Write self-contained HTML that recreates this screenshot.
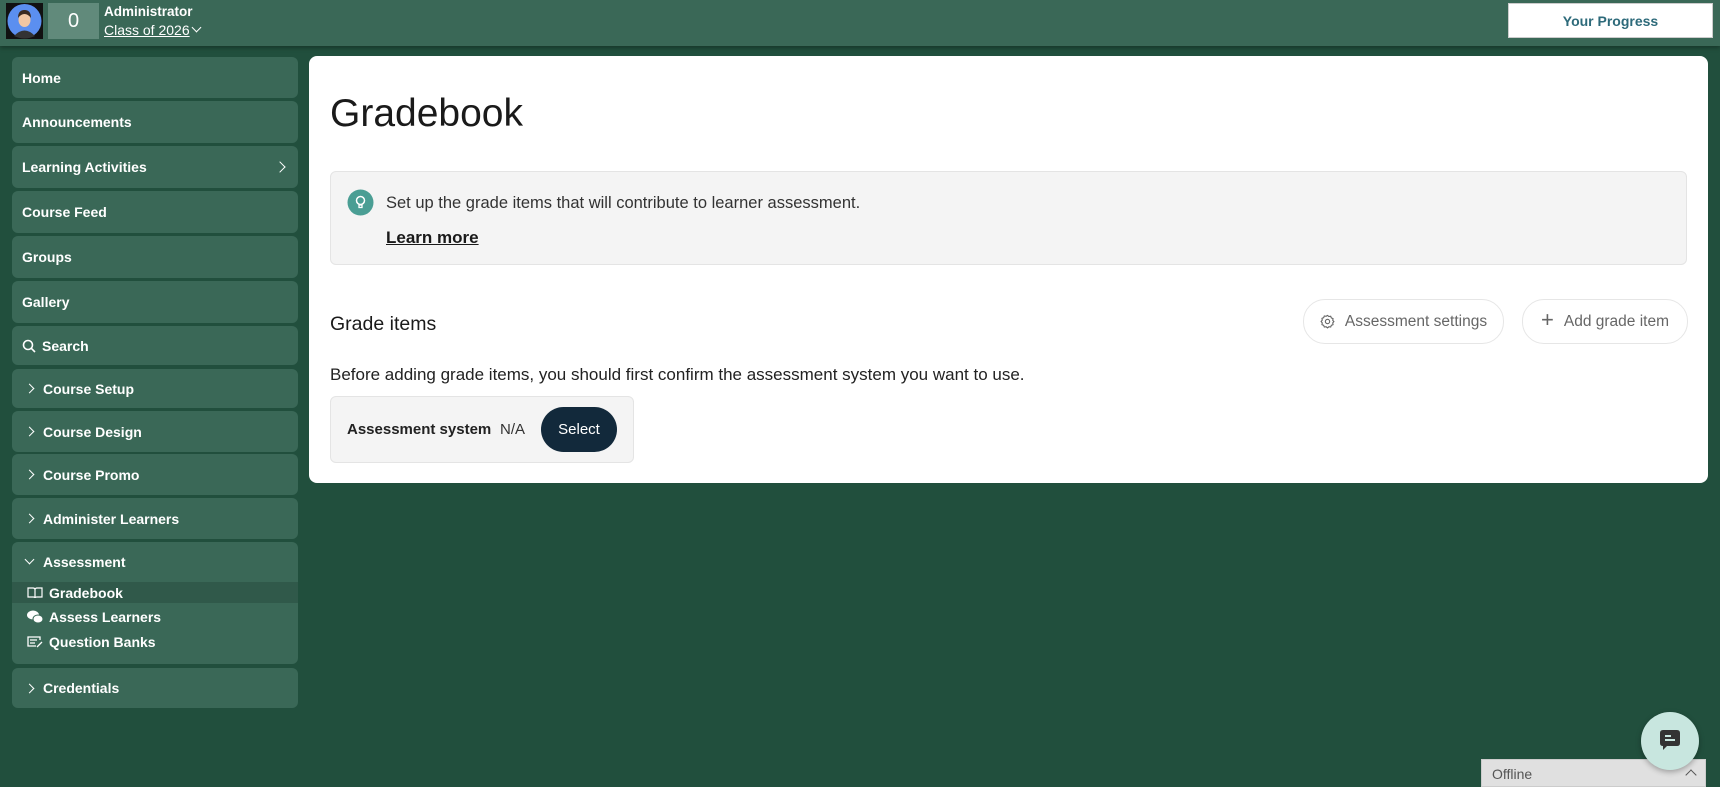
<!DOCTYPE html>
<html><head><meta charset="utf-8"><style>
*{box-sizing:border-box;margin:0;padding:0}
body{width:1720px;height:787px;overflow:hidden;background:#214f3d;font-family:"Liberation Sans",sans-serif;position:relative}
.top{position:absolute;left:0;top:0;width:1720px;height:46px;background:#3a6857;box-shadow:0 2px 4px rgba(0,0,0,.3)}
.abs{position:absolute}
.nav{position:absolute;left:12px;width:286px;background:#3a6857;border-radius:6px;color:#fff;font-weight:bold;font-size:14px;display:flex;align-items:center;padding-left:10px}
.chev{display:inline-block;width:7px;height:7px;border-right:1.6px solid #fff;border-bottom:1.6px solid #fff;transform:rotate(-45deg);margin-right:10px;margin-left:4px}
.sub{position:absolute;left:12px;width:286px;height:22px;color:#fff;font-weight:bold;font-size:14px;display:flex;align-items:center;padding-left:14px}
.card{position:absolute;left:309px;top:56px;width:1399px;height:427px;background:#fff;border-radius:8px}
.btn{position:absolute;border:1px solid #e6e6e6;border-radius:22px;color:#666;font-size:15.5px;display:flex;align-items:center;justify-content:center;gap:10px}
</style></head><body>
<div class="top"></div>
<div class="abs" style="left:6px;top:3px;width:37px;height:36px;background:#111"></div>
<svg class="abs" style="left:6px;top:3px" width="37" height="36" viewBox="0 0 37 36"><circle cx="18.5" cy="18" r="17" fill="#5b8ff0"/><path d="M8 33 Q18.5 22 29 33 Q18.5 38 8 33Z" fill="#333"/><ellipse cx="18.5" cy="17" rx="6" ry="7" fill="#f1c7a3"/><path d="M12 15 Q12 7 18.5 7 Q25 7 25 15 Q22 11 18.5 11 Q15 11 12 15Z" fill="#3a2a20"/></svg>
<div class="abs" style="left:48px;top:3px;width:51px;height:36px;background:#618a7b;color:#fff;font-size:20px;display:flex;align-items:center;justify-content:center">0</div>
<div class="abs" style="left:104px;top:4px;color:#fff;font-weight:bold;font-size:13.5px">Administrator</div>
<div class="abs" style="left:104px;top:22px;color:#fff;font-size:14px;text-decoration:underline">Class of 2026</div>
<div class="abs" style="left:193px;top:24px;width:7px;height:7px;border-right:1.6px solid #fff;border-bottom:1.6px solid #fff;transform:rotate(45deg)"></div>
<div class="abs" style="left:1508px;top:3px;width:205px;height:35px;background:#fff;border:1px solid #ccc;color:#2d6a7a;font-weight:bold;font-size:14px;display:flex;align-items:center;justify-content:center">Your Progress</div>

<div class="nav" style="top:57px;height:41px">Home</div>
<div class="nav" style="top:101px;height:42px">Announcements</div>
<div class="nav" style="top:146px;height:42px">Learning Activities<span style="position:absolute;right:14px;top:17px;width:8px;height:8px;border-right:1.6px solid #fff;border-bottom:1.6px solid #fff;transform:rotate(-45deg)"></span></div>
<div class="nav" style="top:191px;height:42px">Course Feed</div>
<div class="nav" style="top:236px;height:42px">Groups</div>
<div class="nav" style="top:281px;height:42px">Gallery</div>
<div class="nav" style="top:326px;height:39px"><svg width="14" height="14" viewBox="0 0 14 14" style="margin-right:6px"><circle cx="6" cy="6" r="4.5" fill="none" stroke="#fff" stroke-width="1.6"/><path d="M9.3 9.3L13 13" stroke="#fff" stroke-width="1.6"/></svg>Search</div>
<div class="nav" style="top:369px;height:39px"><span class="chev"></span>Course Setup</div>
<div class="nav" style="top:411px;height:41px"><span class="chev"></span>Course Design</div>
<div class="nav" style="top:454px;height:41px"><span class="chev"></span>Course Promo</div>
<div class="nav" style="top:498px;height:41px"><span class="chev"></span>Administer Learners</div>
<div class="nav" style="top:542px;height:122px;align-items:flex-start;padding-top:12px"><span class="chev" style="transform:rotate(45deg);margin-top:2px"></span>Assessment</div>
<div class="sub" style="top:582px;height:21px;background:#30594a">
<svg width="16" height="12" viewBox="0 0 16 12" style="margin-right:6px;margin-left:1px"><path d="M1 1h5q2 0 2 2v8q0-1-2-1H1ZM15 1h-5q-2 0-2 2v8q0-1 2-1h5Z" fill="none" stroke="#fff" stroke-width="1.2"/></svg>Gradebook</div>
<div class="sub" style="top:606px"><svg width="16" height="14" viewBox="0 0 16 14" style="margin-right:6px;margin-left:1px"><ellipse cx="6" cy="5" rx="6" ry="4.5" fill="#fff"/><ellipse cx="11" cy="9" rx="5" ry="4" fill="#fff" stroke="#3a6857"/></svg>Assess Learners</div>
<div class="sub" style="top:631px"><svg width="16" height="12" viewBox="0 0 16 12" style="margin-right:6px;margin-left:1px"><path d="M13 4V1H1v9h8" fill="none" stroke="#fff" stroke-width="1.3"/><path d="M3 4h7M3 7h5M10 11l5-5" stroke="#fff" stroke-width="1.3"/></svg>Question Banks</div>
<div class="nav" style="top:668px;height:40px"><span class="chev"></span>Credentials</div>

<div class="card"></div>
<div class="abs" style="left:330px;top:92px;font-size:39px;color:#1a1a1a">Gradebook</div>
<div class="abs" style="left:330px;top:171px;width:1357px;height:94px;background:#f4f4f4;border:1px solid #e4e4e4;border-radius:6px"></div>
<svg class="abs" style="left:347px;top:189px" width="27" height="27" viewBox="0 0 27 27"><circle cx="13.5" cy="13.5" r="13" fill="#4a9e94"/><circle cx="13.5" cy="11.5" r="4" fill="none" stroke="#fff" stroke-width="1.5"/><path d="M12 16h3v2.5h-3z" fill="none" stroke="#fff" stroke-width="1.3"/></svg>
<div class="abs" style="left:386px;top:194px;font-size:16.5px;color:#333">Set up the grade items that will contribute to learner assessment.</div>
<div class="abs" style="left:386px;top:228px;font-size:17px;color:#1a1a1a;font-weight:bold;text-decoration:underline">Learn more</div>
<div class="abs" style="left:330px;top:313px;font-size:19.5px;color:#1a1a1a">Grade items</div>
<div class="btn" style="left:1303px;top:299px;width:201px;height:45px"><svg width="15" height="15" viewBox="0 0 16 16"><path d="M8 1.5l1.5 1.2 1.9-.3.7 1.8 1.8.7-.3 1.9L14.8 8l-1.2 1.5.3 1.9-1.8.7-.7 1.8-1.9-.3L8 14.8l-1.5-1.2-1.9.3-.7-1.8-1.8-.7.3-1.9L1.2 8l1.2-1.5-.3-1.9 1.8-.7.7-1.8 1.9.3Z" fill="none" stroke="#666" stroke-width="1.2"/><circle cx="8" cy="8" r="2.3" fill="none" stroke="#666" stroke-width="1.2"/></svg>Assessment settings</div>
<div class="btn" style="left:1522px;top:299px;width:166px;height:45px"><span style="font-size:22px;font-weight:300;margin-top:-3px">+</span>Add grade item</div>
<div class="abs" style="left:330px;top:365px;font-size:17px;color:#222">Before adding grade items, you should first confirm the assessment system you want to use.</div>
<div class="abs" style="left:330px;top:396px;width:304px;height:67px;background:#f4f4f4;border:1px solid #e4e4e4;border-radius:6px"></div>
<div class="abs" style="left:347px;top:421px;font-size:15px;font-weight:bold;color:#222">Assessment system</div>
<div class="abs" style="left:500px;top:421px;font-size:15px;color:#333">N/A</div>
<div class="abs" style="left:541px;top:407px;width:76px;height:45px;background:#12293b;border-radius:23px;color:#fff;font-size:15px;display:flex;align-items:center;justify-content:center">Select</div>

<div class="abs" style="left:1481px;top:759px;width:225px;height:28px;background:#e0e0e0;border:1px solid #ccc;color:#555;font-size:14px;padding:6px 10px">Offline<span style="position:absolute;right:10px;top:11px;width:8px;height:8px;border-left:1.6px solid #555;border-top:1.6px solid #555;transform:rotate(45deg)"></span></div>
<div class="abs" style="left:1641px;top:712px;width:58px;height:58px;border-radius:50%;background:#c8e6df;box-shadow:0 2px 6px rgba(0,0,0,.3)"></div>
<svg class="abs" style="left:1656px;top:727px" width="28" height="28" viewBox="0 0 28 28"><path d="M4 6q0-3 3-3h14q3 0 3 3v10q0 3-3 3H11l-4 4v-4q-3 0-3-3Z" fill="#333"/><path d="M9 9h6M9 13h10" stroke="#c8e6df" stroke-width="2"/></svg>
</body></html>
